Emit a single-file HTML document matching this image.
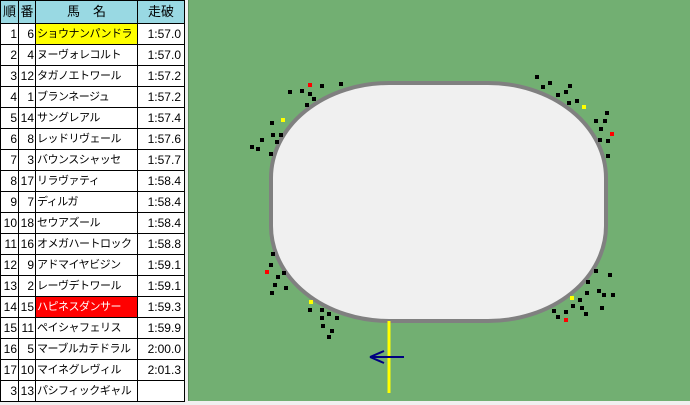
<!DOCTYPE html>
<html><head><meta charset="utf-8"><style>
body{margin:0;width:690px;height:405px;background:#f0f0f0;position:relative;overflow:hidden;font-family:"Liberation Sans","Noto Sans CJK JP",sans-serif;}
table{position:absolute;left:0;top:0;border-collapse:collapse;font-size:12px;background:#fff;table-layout:fixed;width:185px;}
td{border:1px solid #000;height:20px;padding:0 1px;white-space:nowrap;line-height:20px;overflow:hidden;}
tr.h td{background:#99D9E3;height:22px;text-align:center;font-size:13px;}
td.n{text-align:right;}
td.t{text-align:right;padding-right:3px;}
td.m{font-size:11px;letter-spacing:-0.5px;}
.g{position:absolute;left:188px;top:0;width:502px;height:401px;background:#72AF72;border-left:1px solid #5a8a5a;}
</style></head><body>
<table>
<colgroup><col style="width:18px"><col style="width:17px"><col style="width:102px"><col style="width:47px"></colgroup>
<tr class="h"><td>順</td><td>番</td><td>馬　名</td><td>走破</td></tr>
<tr><td class="n">1</td><td class="n">6</td><td class="m" style="background:#ffff00">ショウナンパンドラ</td><td class="t">1:57.0</td></tr>
<tr><td class="n">2</td><td class="n">4</td><td class="m">ヌーヴォレコルト</td><td class="t">1:57.0</td></tr>
<tr><td class="n">3</td><td class="n">12</td><td class="m">タガノエトワール</td><td class="t">1:57.2</td></tr>
<tr><td class="n">4</td><td class="n">1</td><td class="m">ブランネージュ</td><td class="t">1:57.2</td></tr>
<tr><td class="n">5</td><td class="n">14</td><td class="m">サングレアル</td><td class="t">1:57.4</td></tr>
<tr><td class="n">6</td><td class="n">8</td><td class="m">レッドリヴェール</td><td class="t">1:57.6</td></tr>
<tr><td class="n">7</td><td class="n">3</td><td class="m">バウンスシャッセ</td><td class="t">1:57.7</td></tr>
<tr><td class="n">8</td><td class="n">17</td><td class="m">リラヴァティ</td><td class="t">1:58.4</td></tr>
<tr><td class="n">9</td><td class="n">7</td><td class="m">ディルガ</td><td class="t">1:58.4</td></tr>
<tr><td class="n">10</td><td class="n">18</td><td class="m">セウアズール</td><td class="t">1:58.4</td></tr>
<tr><td class="n">11</td><td class="n">16</td><td class="m">オメガハートロック</td><td class="t">1:58.8</td></tr>
<tr><td class="n">12</td><td class="n">9</td><td class="m">アドマイヤビジン</td><td class="t">1:59.1</td></tr>
<tr><td class="n">13</td><td class="n">2</td><td class="m">レーヴデトワール</td><td class="t">1:59.1</td></tr>
<tr><td class="n">14</td><td class="n">15</td><td class="m" style="background:#ff0000;color:#fff">ハピネスダンサー</td><td class="t">1:59.3</td></tr>
<tr><td class="n">15</td><td class="n">11</td><td class="m">ペイシャフェリス</td><td class="t">1:59.9</td></tr>
<tr><td class="n">16</td><td class="n">5</td><td class="m">マーブルカテドラル</td><td class="t">2:00.0</td></tr>
<tr><td class="n">17</td><td class="n">10</td><td class="m">マイネグレヴィル</td><td class="t">2:01.3</td></tr>
<tr><td class="n">3</td><td class="n">13</td><td class="m">パシフィックギャル</td><td class="t"></td></tr>
</table>
<div class="g"></div>
<svg style="position:absolute;left:0;top:0" width="690" height="405">
<rect x="271" y="83" width="335" height="238" rx="118" ry="95" fill="#f0f0f0" stroke="#808080" stroke-width="4"/>
<g fill="#000">
<rect x="320" y="84" width="4" height="4"/><rect x="339" y="82" width="4" height="4"/><rect x="288" y="90" width="4" height="4"/><rect x="300" y="89" width="4" height="4"/><rect x="308" y="92" width="4" height="4"/><rect x="312" y="97" width="4" height="4"/><rect x="305" y="103" width="4" height="4"/><rect x="270" y="121" width="4" height="4"/><rect x="271" y="133" width="4" height="4"/><rect x="279" y="133" width="4" height="4"/><rect x="260" y="138" width="4" height="4"/><rect x="275" y="140" width="4" height="4"/><rect x="250" y="145" width="4" height="4"/><rect x="256" y="147" width="4" height="4"/><rect x="269" y="152" width="4" height="4"/>
<rect x="535" y="75" width="4" height="4"/><rect x="541" y="85" width="4" height="4"/><rect x="548" y="81" width="4" height="4"/><rect x="568" y="84" width="4" height="4"/><rect x="564" y="90" width="4" height="4"/><rect x="556" y="93" width="4" height="4"/><rect x="567" y="101" width="4" height="4"/><rect x="575" y="99" width="4" height="4"/><rect x="605" y="111" width="4" height="4"/><rect x="594" y="119" width="4" height="4"/><rect x="603" y="119" width="4" height="4"/><rect x="599" y="127" width="4" height="4"/><rect x="598" y="138" width="4" height="4"/><rect x="606" y="139" width="4" height="4"/><rect x="606" y="154" width="4" height="4"/>
<rect x="271" y="252" width="4" height="4"/><rect x="269" y="263" width="4" height="4"/><rect x="276" y="275" width="4" height="4"/><rect x="282" y="271" width="4" height="4"/><rect x="273" y="283" width="4" height="4"/><rect x="284" y="286" width="4" height="4"/><rect x="270" y="291" width="4" height="4"/><rect x="308" y="308" width="4" height="4"/><rect x="320" y="308" width="4" height="4"/><rect x="327" y="312" width="4" height="4"/><rect x="335" y="316" width="4" height="4"/><rect x="320" y="316" width="4" height="4"/><rect x="321" y="324" width="4" height="4"/><rect x="330" y="329" width="4" height="4"/><rect x="327" y="335" width="4" height="4"/>
<rect x="594" y="269" width="4" height="4"/><rect x="608" y="273" width="4" height="4"/><rect x="586" y="280" width="4" height="4"/><rect x="597" y="289" width="4" height="4"/><rect x="585" y="291" width="4" height="4"/><rect x="602" y="293" width="4" height="4"/><rect x="611" y="293" width="4" height="4"/><rect x="578" y="298" width="4" height="4"/><rect x="571" y="304" width="4" height="4"/><rect x="580" y="306" width="4" height="4"/><rect x="600" y="306" width="4" height="4"/><rect x="552" y="309" width="4" height="4"/><rect x="564" y="310" width="4" height="4"/><rect x="584" y="312" width="4" height="4"/><rect x="556" y="315" width="4" height="4"/>
</g>
<g fill="#ff0000"><rect x="308" y="83" width="4" height="4"/><rect x="610" y="132" width="4" height="4"/><rect x="265" y="270" width="4" height="4"/><rect x="564" y="318" width="4" height="4"/></g>
<g fill="#ffff00"><rect x="281" y="118" width="4" height="4"/><rect x="582" y="105" width="4" height="4"/><rect x="309" y="300" width="4" height="4"/><rect x="570" y="296" width="4" height="4"/></g>
<line x1="389" y1="321" x2="389" y2="393" stroke="#ffff00" stroke-width="3"/>
<path d="M370 357 H404 M370 357 L384 351 M370 357 L384 363" stroke="#000080" stroke-width="2" fill="none"/>
</svg>
</body></html>
